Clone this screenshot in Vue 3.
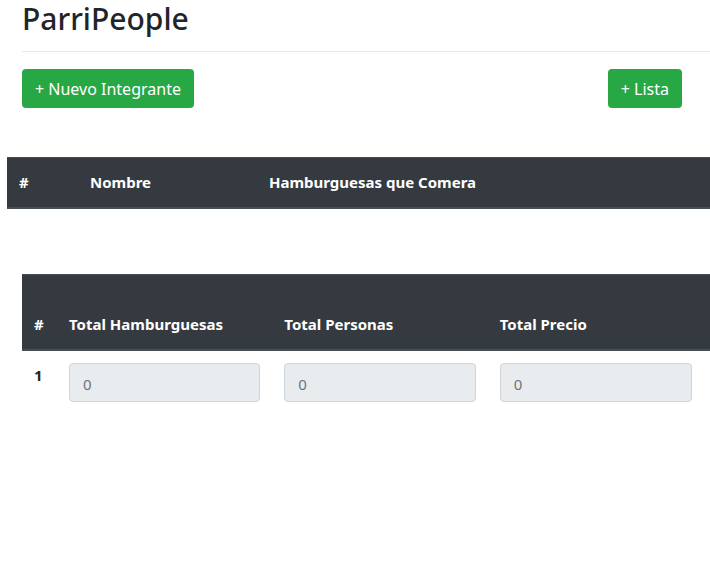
<script setup>
import { ref } from 'vue'

const people = ref([])
const totals = ref([
  { id: 'hamburguesas', label: 'Total Hamburguesas', value: 0 },
  { id: 'personas', label: 'Total Personas', value: 0 },
  { id: 'precio', label: 'Total Precio', value: 0 },
])
</script>

<template>
  <main class="page">
    <header class="head">
      <h1 class="title">ParriPeople</h1>
    </header>
    <div class="actions">
      <button type="button" class="btn">+ Nuevo Integrante</button>
      <button type="button" class="btn">+ Lista</button>
    </div>

    <table class="table people">
      <colgroup>
        <col class="people-num" />
        <col class="people-name" />
        <col />
      </colgroup>
      <thead>
        <tr>
          <th scope="col">#</th>
          <th scope="col">Nombre</th>
          <th scope="col">Hamburguesas que Comera</th>
        </tr>
      </thead>
      <tbody>
        <tr v-for="(person, i) in people" :key="i">
          <th scope="row">{{ i + 1 }}</th>
          <td>{{ person.name }}</td>
          <td>{{ person.count }}</td>
        </tr>
      </tbody>
    </table>

    <table class="table totals">
      <colgroup>
        <col class="totals-num" />
        <col class="totals-col" />
        <col class="totals-col" />
        <col />
      </colgroup>
      <thead>
        <tr>
          <th scope="col">#</th>
          <th v-for="t in totals" :key="t.id" scope="col">
            <label :for="t.id">{{ t.label }}</label>
          </th>
        </tr>
      </thead>
      <tbody>
        <tr>
          <th scope="row">1</th>
          <td v-for="t in totals" :key="t.id">
            <input :id="t.id" class="field" type="text" :value="t.value" disabled />
          </td>
        </tr>
      </tbody>
    </table>
  </main>
</template>

<style>
body {
  margin: 0;
  background: #fff;
}
</style>

<style scoped>
.page {
  box-sizing: border-box;
  font-family: "Noto Sans", "Open Sans", sans-serif;
  font-size: 15px;
  line-height: 25px;
  color: #212529;
}

.head {
  margin-left: 22px;
  padding-bottom: 14px;
  border-bottom: 1px solid #e9e9e9;
}

.title {
  margin: 0;
  font-size: 30px;
  font-weight: 500;
  line-height: 37px;
}

.actions {
  display: flex;
  justify-content: space-between;
  padding: 17px 28px 0 22px;
}

.btn {
  height: 39px;
  padding: 1px 13px 0;
  border: 0;
  border-radius: 4px;
  background: #28a745;
  color: #fff;
  font: inherit;
  font-size: 16px;
}

.table {
  table-layout: fixed;
  border-collapse: separate;
  border-spacing: 0;
}

.table th,
.table td {
  padding: 12px;
  text-align: left;
  vertical-align: top;
}

.table th {
  font-weight: 700;
}

.table thead th {
  background: #343a40;
  color: #fff;
  border-top: 1px solid #454d55;
  border-bottom: 2px solid #454d55;
  vertical-align: bottom;
}

.people {
  width: calc(100% - 7px);
  margin: 49px 0 0 7px;
}

.people-num {
  width: 71px;
}

.people-name {
  width: 179px;
}

.totals {
  width: calc(100% - 22px);
  margin: 65px 0 0 22px;
}

.totals thead th {
  padding-top: 37px;
}

.totals-num {
  width: 35px;
}

.totals-col {
  width: 31.3%;
}

.totals tr > :last-child {
  padding-right: 18px;
}

.field {
  display: block;
  box-sizing: border-box;
  width: 100%;
  height: 39px;
  padding: 3px 13px 0;
  border: 1px solid #ced4da;
  border-radius: 4px;
  background: #e9ecef;
  color: #6c757d;
  font: inherit;
}
</style>
